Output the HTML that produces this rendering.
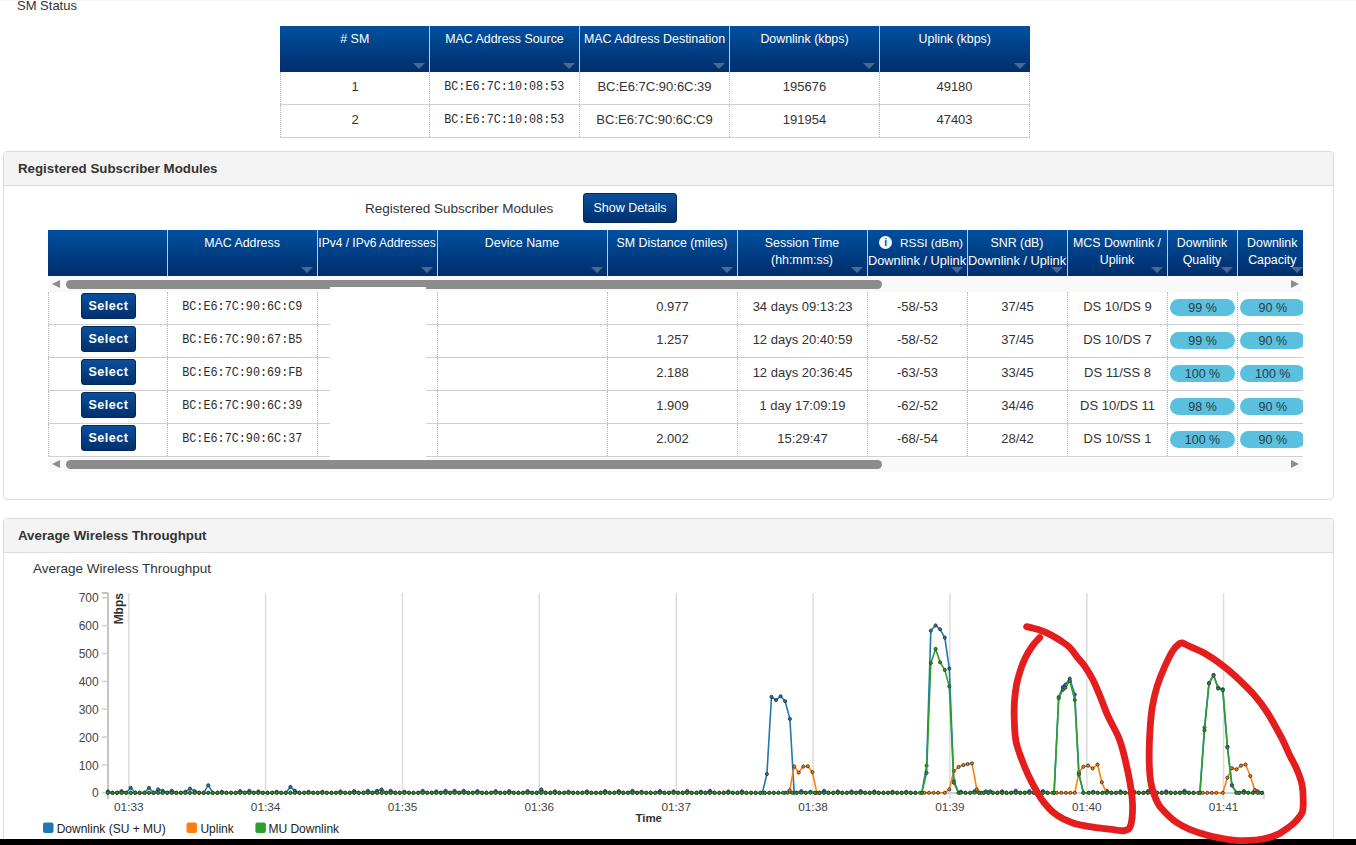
<!DOCTYPE html>
<html><head><meta charset="utf-8">
<style>
*{box-sizing:border-box;margin:0;padding:0}
html,body{width:1356px;height:845px;overflow:hidden;background:#fff}
body{position:relative;font-family:"Liberation Sans",sans-serif;color:#333;font-size:13px}
.abs{position:absolute}
.topline{left:0;top:0;width:1356px;height:1px;background:#f7f7f7}
.smtitle{left:17px;top:-2px;font-size:13px;color:#333;line-height:16px}
table{border-collapse:collapse;table-layout:fixed}
.hd th{background:linear-gradient(#00509f,#002e6b);color:#fff;font-weight:normal;vertical-align:top;text-align:center;position:relative;border-left:1px solid #c8c8c8;font-size:12.4px;line-height:17px}
.hd th:first-child{border-left:none}
.hd th:first-child::before{content:"";position:absolute;left:-1px;top:0;bottom:0;width:1px;background:linear-gradient(#00509f,#002e6b)}
.hd th .tri{position:absolute;right:4px;bottom:3px;width:0;height:0;border-left:6px solid transparent;border-right:6px solid transparent;border-top:6px solid rgba(160,170,190,.45)}
.bd td{text-align:center;padding-bottom:2px;border-left:1px dotted #b8b8b8;border-bottom:1px solid #cfcfcf;color:#333;font-size:13px}
.bd td.mono,.mono{font-family:"Liberation Mono",monospace;font-size:11.8px}
.panel{border:1px solid #ddd;border-radius:4px;background:#fff}
.phead{position:absolute;left:0;top:0;right:0;height:34px;background:#f4f4f4;border-bottom:1px solid #ddd;border-radius:4px 4px 0 0}
.ptitle{position:absolute;left:14px;top:9px;font-weight:bold;font-size:13.3px;color:#333}
.btn{background:linear-gradient(#0a4f9c,#00306c);color:#fff;border:1px solid #002a5c;border-radius:3px;text-align:center}
.badge{display:inline-block;position:relative;top:1px;background:#5bc0de;border-radius:9px;height:17px;line-height:19px;color:#2a3a44;font-size:12.5px}
.sb{background:#f9f9f9}
.thumb{position:absolute;background:#8c8c8c;border-radius:5px;height:9px}
.larr{position:absolute;width:0;height:0;border-top:4.5px solid transparent;border-bottom:4.5px solid transparent;border-right:8px solid #8c8c8c}
.rarr{position:absolute;width:0;height:0;border-top:4.5px solid transparent;border-bottom:4.5px solid transparent;border-left:8px solid #8c8c8c}
.sel{position:relative;top:-1px;width:55px;height:26px;line-height:24px;margin-left:32px;font-weight:bold;font-size:12.6px;letter-spacing:.5px}
.info{display:inline-block;width:13px;height:13px;border-radius:50%;background:#fff;color:#00479a;font-weight:bold;font-size:10px;line-height:13px;text-align:center;vertical-align:1px;margin-right:8px;margin-left:8px}
.m{display:inline-block;font-size:13.4px;transform:scaleX(.88);color:#2a2a2a}
</style></head><body>
<div class="abs topline"></div>
<div class="abs smtitle">SM Status</div>

<!-- SM status table -->
<table class="abs" style="left:280px;top:26px;width:749px">
<colgroup><col style="width:149px"><col style="width:150px"><col style="width:150px"><col style="width:150px"><col style="width:150px"></colgroup>
<tr class="hd" style="height:46px">
<th style="padding-top:5px"># SM<span class="tri"></span></th>
<th style="padding-top:5px">MAC Address Source<span class="tri"></span></th>
<th style="padding-top:5px">MAC Address Destination<span class="tri"></span></th>
<th style="padding-top:5px">Downlink (kbps)<span class="tri"></span></th>
<th style="padding-top:5px">Uplink (kbps)<span class="tri"></span></th>
</tr>
<tr class="bd" style="height:32px"><td>1</td><td class="mono"><span class="m">BC:E6:7C:10:08:53</span></td><td>BC:E6:7C:90:6C:39</td><td>195676</td><td style="border-right:1px dotted #b8b8b8">49180</td></tr>
<tr class="bd" style="height:33px"><td>2</td><td class="mono"><span class="m">BC:E6:7C:10:08:53</span></td><td>BC:E6:7C:90:6C:C9</td><td>191954</td><td style="border-right:1px dotted #b8b8b8">47403</td></tr>
</table>

<!-- Panel 1 -->
<div class="abs panel" style="left:3px;top:151px;width:1331px;height:349px">
  <div class="phead"><div class="ptitle">Registered Subscriber Modules</div></div>
</div>
<div class="abs" style="left:365px;top:201px;font-size:13.5px;color:#333">Registered Subscriber Modules</div>
<div class="abs btn" style="left:583px;top:193px;width:94px;height:30px;line-height:28px;font-size:12.5px">Show Details</div>


<!-- Registered table -->
<div class="abs" style="left:48px;top:230px;width:1255px;height:242px;overflow:hidden">
<table class="abs" style="left:0;top:0;width:1259px">
<colgroup><col style="width:119px"><col style="width:150px"><col style="width:120px"><col style="width:170px"><col style="width:130px"><col style="width:130px"><col style="width:100px"><col style="width:100px"><col style="width:100px"><col style="width:70px"><col style="width:70px"></colgroup>
<tr class="hd" style="height:46px">
<th></th>
<th style="padding-top:5px">MAC Address<span class="tri"></span></th>
<th style="padding-top:5px;white-space:nowrap;font-size:12px">IPv4 / IPv6 Addresses<span class="tri"></span></th>
<th style="padding-top:5px">Device Name<span class="tri"></span></th>
<th style="padding-top:5px">SM Distance (miles)<span class="tri"></span></th>
<th style="padding-top:5px">Session Time<br>(hh:mm:ss)<span class="tri"></span></th>
<th style="padding-top:5px;white-space:nowrap"><span class="info">i</span><span style="font-size:11.8px">RSSI (dBm)</span><br><span style="font-size:12.8px">Downlink / Uplink</span><span class="tri"></span></th>
<th style="padding-top:5px;white-space:nowrap">SNR (dB)<br><span style="font-size:12.8px">Downlink / Uplink</span><span class="tri"></span></th>
<th style="padding-top:5px">MCS Downlink /<br>Uplink<span class="tri"></span></th>
<th style="padding-top:5px">Downlink<br>Quality<span class="tri"></span></th>
<th style="padding-top:5px">Downlink<br>Capacity<span class="tri"></span></th>
</tr>
</table>
<div class="abs sb" style="left:0;top:46px;width:1255px;height:16px"><div class="larr" style="left:4px;top:4px"></div><div class="thumb" style="left:18px;top:4px;width:816px"></div><div class="rarr" style="left:1243px;top:4px"></div></div>
<table class="abs reg" style="left:0;top:62px;width:1259px">
<colgroup><col style="width:119px"><col style="width:150px"><col style="width:120px"><col style="width:170px"><col style="width:130px"><col style="width:130px"><col style="width:100px"><col style="width:100px"><col style="width:100px"><col style="width:70px"><col style="width:70px"></colgroup>
<tr class="bd" style="height:32px"><td><div class="btn sel">Select</div></td><td class="mono"><span class="m">BC:E6:7C:90:6C:C9</span></td><td></td><td></td><td>0.977</td><td>34 days 09:13:23</td><td>-58/-53</td><td>37/45</td><td>DS 10/DS 9</td><td><span class="badge" style="width:65px">99 %</span></td><td><span class="badge" style="width:65px">90 %</span></td></tr>
<tr class="bd" style="height:33px"><td><div class="btn sel">Select</div></td><td class="mono"><span class="m">BC:E6:7C:90:67:B5</span></td><td></td><td></td><td>1.257</td><td>12 days 20:40:59</td><td>-58/-52</td><td>37/45</td><td>DS 10/DS 7</td><td><span class="badge" style="width:65px">99 %</span></td><td><span class="badge" style="width:65px">90 %</span></td></tr>
<tr class="bd" style="height:33px"><td><div class="btn sel">Select</div></td><td class="mono"><span class="m">BC:E6:7C:90:69:FB</span></td><td></td><td></td><td>2.188</td><td>12 days 20:36:45</td><td>-63/-53</td><td>33/45</td><td>DS 11/SS 8</td><td><span class="badge" style="width:65px">100 %</span></td><td><span class="badge" style="width:65px">100 %</span></td></tr>
<tr class="bd" style="height:33px"><td><div class="btn sel">Select</div></td><td class="mono"><span class="m">BC:E6:7C:90:6C:39</span></td><td></td><td></td><td>1.909</td><td>1 day 17:09:19</td><td>-62/-52</td><td>34/46</td><td>DS 10/DS 11</td><td><span class="badge" style="width:65px">98 %</span></td><td><span class="badge" style="width:65px">90 %</span></td></tr>
<tr class="bd" style="height:33px"><td><div class="btn sel">Select</div></td><td class="mono"><span class="m">BC:E6:7C:90:6C:37</span></td><td></td><td></td><td>2.002</td><td>15:29:47</td><td>-68/-54</td><td>28/42</td><td>DS 10/SS 1</td><td><span class="badge" style="width:65px">100 %</span></td><td><span class="badge" style="width:65px">90 %</span></td></tr>

</table>
<div class="abs sb" style="left:0;top:228px;width:1255px;height:14px"><div class="larr" style="left:4px;top:2px"></div><div class="thumb" style="left:18px;top:2px;width:816px"></div><div class="rarr" style="left:1243px;top:2px"></div></div>
</div>
<div class="abs" style="left:330px;top:287px;width:96px;height:173px;background:#fff"></div>

<!-- Panel 2 -->
<div class="abs panel" style="left:3px;top:518px;width:1331px;height:340px">
  <div class="phead"><div class="ptitle">Average Wireless Throughput</div></div>
</div>
<div class="abs" style="left:33px;top:561px;font-size:13.5px;color:#333">Average Wireless Throughput</div>

<!--CHART-->
<svg class="abs" style="left:0;top:0" width="1356" height="845">
<line x1="128.8" y1="593" x2="128.8" y2="799" stroke="#dcdcdc" stroke-width="1.5"/>
<line x1="265.6" y1="593" x2="265.6" y2="799" stroke="#dcdcdc" stroke-width="1.5"/>
<line x1="402.5" y1="593" x2="402.5" y2="799" stroke="#dcdcdc" stroke-width="1.5"/>
<line x1="539.3" y1="593" x2="539.3" y2="799" stroke="#dcdcdc" stroke-width="1.5"/>
<line x1="676.2" y1="593" x2="676.2" y2="799" stroke="#dcdcdc" stroke-width="1.5"/>
<line x1="813.0" y1="593" x2="813.0" y2="799" stroke="#dcdcdc" stroke-width="1.5"/>
<line x1="949.9" y1="593" x2="949.9" y2="799" stroke="#dcdcdc" stroke-width="1.5"/>
<line x1="1086.8" y1="593" x2="1086.8" y2="799" stroke="#dcdcdc" stroke-width="1.5"/>
<line x1="1223.6" y1="593" x2="1223.6" y2="799" stroke="#dcdcdc" stroke-width="1.5"/>
<line x1="108" y1="592.5" x2="108" y2="799" stroke="#c4c4c4" stroke-width="2"/>
<line x1="102" y1="593" x2="108" y2="593" stroke="#c4c4c4" stroke-width="2"/>
<line x1="102" y1="792.8" x2="108" y2="792.8" stroke="#d0d0d0" stroke-width="1.5"/>
<text x="98.7" y="797.4" text-anchor="end" font-size="12" fill="#444">0</text>
<line x1="102" y1="764.9" x2="108" y2="764.9" stroke="#d0d0d0" stroke-width="1.5"/>
<text x="98.7" y="769.5" text-anchor="end" font-size="12" fill="#444">100</text>
<line x1="102" y1="737.1" x2="108" y2="737.1" stroke="#d0d0d0" stroke-width="1.5"/>
<text x="98.7" y="741.7" text-anchor="end" font-size="12" fill="#444">200</text>
<line x1="102" y1="709.2" x2="108" y2="709.2" stroke="#d0d0d0" stroke-width="1.5"/>
<text x="98.7" y="713.8" text-anchor="end" font-size="12" fill="#444">300</text>
<line x1="102" y1="681.4" x2="108" y2="681.4" stroke="#d0d0d0" stroke-width="1.5"/>
<text x="98.7" y="686.0" text-anchor="end" font-size="12" fill="#444">400</text>
<line x1="102" y1="653.5" x2="108" y2="653.5" stroke="#d0d0d0" stroke-width="1.5"/>
<text x="98.7" y="658.1" text-anchor="end" font-size="12" fill="#444">500</text>
<line x1="102" y1="625.6" x2="108" y2="625.6" stroke="#d0d0d0" stroke-width="1.5"/>
<text x="98.7" y="630.2" text-anchor="end" font-size="12" fill="#444">600</text>
<line x1="102" y1="597.8" x2="108" y2="597.8" stroke="#d0d0d0" stroke-width="1.5"/>
<text x="98.7" y="602.4" text-anchor="end" font-size="12" fill="#444">700</text>
<line x1="108" y1="793" x2="1264" y2="793" stroke="#cfcfcf" stroke-width="2"/>
<line x1="1264" y1="793" x2="1264" y2="799" stroke="#cfcfcf" stroke-width="1.5"/>
<text x="128.8" y="811.2" text-anchor="middle" font-size="11.8" fill="#444">01:33</text>
<text x="265.6" y="811.2" text-anchor="middle" font-size="11.8" fill="#444">01:34</text>
<text x="402.5" y="811.2" text-anchor="middle" font-size="11.8" fill="#444">01:35</text>
<text x="539.3" y="811.2" text-anchor="middle" font-size="11.8" fill="#444">01:36</text>
<text x="676.2" y="811.2" text-anchor="middle" font-size="11.8" fill="#444">01:37</text>
<text x="813.0" y="811.2" text-anchor="middle" font-size="11.8" fill="#444">01:38</text>
<text x="949.9" y="811.2" text-anchor="middle" font-size="11.8" fill="#444">01:39</text>
<text x="1086.8" y="811.2" text-anchor="middle" font-size="11.8" fill="#444">01:40</text>
<text x="1223.6" y="811.2" text-anchor="middle" font-size="11.8" fill="#444">01:41</text>
<text x="648.7" y="822" text-anchor="middle" font-size="11.5" font-weight="bold" fill="#333">Time</text>
<text transform="translate(122.8 608.7) rotate(-90)" text-anchor="middle" font-size="12" font-weight="bold" fill="#333">Mbps</text>
<path d="M107.9 791.4 L112.5 792.8 L117.0 792.8 L121.6 791.1 L126.1 792.8 L130.7 787.8 L135.3 792.8 L139.8 792.8 L144.4 792.8 L149.0 787.8 L153.5 792.8 L158.1 789.4 L162.6 790.8 L167.2 792.8 L171.8 790.8 L176.3 792.8 L180.9 792.8 L185.4 791.7 L190.0 788.6 L194.6 791.1 L199.1 792.8 L203.7 792.8 L208.3 785.2 L212.8 792.8 L217.4 792.8 L221.9 791.7 L226.5 792.8 L231.1 792.8 L235.6 792.8 L240.2 791.1 L244.8 792.8 L249.3 790.8 L253.9 792.8 L258.4 791.4 L263.0 792.8 L267.6 792.8 L272.1 792.8 L276.7 791.7 L281.2 792.8 L285.8 792.8 L290.4 786.9 L294.9 790.8 L299.5 792.8 L304.1 792.8 L308.6 791.7 L313.2 792.8 L317.7 792.8 L322.3 791.7 L326.9 792.8 L331.4 792.8 L336.0 792.8 L340.5 791.4 L345.1 792.8 L349.7 792.8 L354.2 791.1 L358.8 792.8 L363.4 792.8 L367.9 790.8 L372.5 792.8 L377.0 790.8 L381.6 789.4 L386.2 792.8 L390.7 790.8 L395.3 792.8 L399.8 792.8 L404.4 791.7 L409.0 792.8 L413.5 792.8 L418.1 792.8 L422.7 790.8 L427.2 792.8 L431.8 792.8 L436.3 791.4 L440.9 792.8 L445.5 790.8 L450.0 792.8 L454.6 790.8 L459.2 792.8 L463.7 790.8 L468.3 792.8 L472.8 792.8 L477.4 791.1 L482.0 792.8 L486.5 792.8 L491.1 792.8 L495.6 791.1 L500.2 792.8 L504.8 792.8 L509.3 791.1 L513.9 792.8 L518.5 792.8 L523.0 792.8 L527.6 791.1 L532.1 792.8 L536.7 792.8 L541.3 789.4 L545.8 792.8 L550.4 792.8 L554.9 791.4 L559.5 792.8 L564.1 792.8 L568.6 791.7 L573.2 792.8 L577.8 792.8 L582.3 792.8 L586.9 791.4 L591.4 792.8 L596.0 792.8 L600.6 792.8 L605.1 791.1 L609.7 792.8 L614.2 792.8 L618.8 791.1 L623.4 792.8 L627.9 792.8 L632.5 790.8 L637.1 792.8 L641.6 791.7 L646.2 792.8 L650.7 792.8 L655.3 792.8 L659.9 791.1 L664.4 792.8 L669.0 792.8 L673.6 791.4 L678.1 792.8 L682.7 792.8 L687.2 791.1 L691.8 792.8 L696.4 792.8 L700.9 791.7 L705.5 792.8 L710.0 790.8 L714.6 792.8 L719.2 792.8 L723.7 792.8 L728.3 791.4 L732.9 792.8 L737.4 792.8 L742.0 791.4 L746.5 792.8 L751.1 792.8 L755.7 792.8 L762.4 792.8 L766.9 774.0 L771.5 696.8 L776.0 700.1 L780.6 696.2 L785.1 701.2 L789.9 718.9 L794.2 792.8 L796.7 792.8 L801.3 791.1 L805.8 792.8 L810.4 791.7 L815.0 792.8 L819.5 792.8 L824.1 790.8 L828.6 792.8 L833.2 792.8 L837.8 791.4 L842.3 792.8 L846.9 792.8 L851.5 791.4 L856.0 792.8 L860.6 791.1 L865.1 792.8 L869.7 792.8 L874.3 791.4 L878.8 792.8 L883.4 792.8 L888.0 792.8 L892.5 791.7 L897.1 792.8 L901.6 792.8 L906.2 791.7 L910.8 792.8 L915.3 792.8 L921.8 792.8 L926.6 765.6 L930.8 630.7 L935.6 625.4 L940.1 629.3 L944.8 637.7 L949.3 668.5 L953.8 780.5 L958.6 792.8 L960.9 791.7 L965.5 792.8 L970.1 792.8 L974.6 791.1 L979.2 792.8 L985.8 791.4 L990.4 791.4 L992.9 792.8 L997.4 792.8 L1002.0 791.4 L1006.6 792.8 L1011.1 792.8 L1015.7 790.8 L1020.2 792.8 L1024.8 792.8 L1029.4 791.1 L1033.9 792.8 L1038.5 792.8 L1043.0 791.1 L1047.6 792.8 L1054.1 792.8 L1058.7 697.0 L1062.9 687.0 L1065.3 684.7 L1069.8 678.6 L1074.8 694.5 L1078.9 773.8 L1083.4 792.8 L1088.7 792.8 L1093.2 791.7 L1097.8 792.8 L1102.4 792.8 L1106.9 790.8 L1111.5 792.8 L1116.0 792.8 L1120.6 791.4 L1125.2 792.8 L1129.7 792.8 L1134.3 791.7 L1138.8 792.8 L1143.4 792.8 L1148.0 791.1 L1152.5 792.8 L1157.1 792.8 L1161.7 792.8 L1166.2 791.4 L1170.8 792.8 L1175.3 792.8 L1179.9 792.8 L1184.5 790.8 L1189.0 792.8 L1193.6 792.8 L1199.9 792.8 L1204.5 727.6 L1209.0 683.0 L1213.6 674.9 L1218.1 687.5 L1222.8 689.2 L1227.4 746.6 L1231.9 785.0 L1236.5 792.8 L1239.2 792.8 L1243.8 791.1 L1248.3 792.8 L1252.9 792.8 L1257.4 791.1 L1262.0 792.8" fill="none" stroke="#1f77b4" stroke-width="1.6" stroke-linejoin="round"/>
<g fill="#1f77b4" stroke="#333" stroke-width="0.9"><circle cx="107.9" cy="791.4" r="1.55"/><circle cx="112.5" cy="792.8" r="1.55"/><circle cx="117.0" cy="792.8" r="1.55"/><circle cx="121.6" cy="791.1" r="1.55"/><circle cx="126.1" cy="792.8" r="1.55"/><circle cx="130.7" cy="787.8" r="1.55"/><circle cx="135.3" cy="792.8" r="1.55"/><circle cx="139.8" cy="792.8" r="1.55"/><circle cx="144.4" cy="792.8" r="1.55"/><circle cx="149.0" cy="787.8" r="1.55"/><circle cx="153.5" cy="792.8" r="1.55"/><circle cx="158.1" cy="789.4" r="1.55"/><circle cx="162.6" cy="790.8" r="1.55"/><circle cx="167.2" cy="792.8" r="1.55"/><circle cx="171.8" cy="790.8" r="1.55"/><circle cx="176.3" cy="792.8" r="1.55"/><circle cx="180.9" cy="792.8" r="1.55"/><circle cx="185.4" cy="791.7" r="1.55"/><circle cx="190.0" cy="788.6" r="1.55"/><circle cx="194.6" cy="791.1" r="1.55"/><circle cx="199.1" cy="792.8" r="1.55"/><circle cx="203.7" cy="792.8" r="1.55"/><circle cx="208.3" cy="785.2" r="1.55"/><circle cx="212.8" cy="792.8" r="1.55"/><circle cx="217.4" cy="792.8" r="1.55"/><circle cx="221.9" cy="791.7" r="1.55"/><circle cx="226.5" cy="792.8" r="1.55"/><circle cx="231.1" cy="792.8" r="1.55"/><circle cx="235.6" cy="792.8" r="1.55"/><circle cx="240.2" cy="791.1" r="1.55"/><circle cx="244.8" cy="792.8" r="1.55"/><circle cx="249.3" cy="790.8" r="1.55"/><circle cx="253.9" cy="792.8" r="1.55"/><circle cx="258.4" cy="791.4" r="1.55"/><circle cx="263.0" cy="792.8" r="1.55"/><circle cx="267.6" cy="792.8" r="1.55"/><circle cx="272.1" cy="792.8" r="1.55"/><circle cx="276.7" cy="791.7" r="1.55"/><circle cx="281.2" cy="792.8" r="1.55"/><circle cx="285.8" cy="792.8" r="1.55"/><circle cx="290.4" cy="786.9" r="1.55"/><circle cx="294.9" cy="790.8" r="1.55"/><circle cx="299.5" cy="792.8" r="1.55"/><circle cx="304.1" cy="792.8" r="1.55"/><circle cx="308.6" cy="791.7" r="1.55"/><circle cx="313.2" cy="792.8" r="1.55"/><circle cx="317.7" cy="792.8" r="1.55"/><circle cx="322.3" cy="791.7" r="1.55"/><circle cx="326.9" cy="792.8" r="1.55"/><circle cx="331.4" cy="792.8" r="1.55"/><circle cx="336.0" cy="792.8" r="1.55"/><circle cx="340.5" cy="791.4" r="1.55"/><circle cx="345.1" cy="792.8" r="1.55"/><circle cx="349.7" cy="792.8" r="1.55"/><circle cx="354.2" cy="791.1" r="1.55"/><circle cx="358.8" cy="792.8" r="1.55"/><circle cx="363.4" cy="792.8" r="1.55"/><circle cx="367.9" cy="790.8" r="1.55"/><circle cx="372.5" cy="792.8" r="1.55"/><circle cx="377.0" cy="790.8" r="1.55"/><circle cx="381.6" cy="789.4" r="1.55"/><circle cx="386.2" cy="792.8" r="1.55"/><circle cx="390.7" cy="790.8" r="1.55"/><circle cx="395.3" cy="792.8" r="1.55"/><circle cx="399.8" cy="792.8" r="1.55"/><circle cx="404.4" cy="791.7" r="1.55"/><circle cx="409.0" cy="792.8" r="1.55"/><circle cx="413.5" cy="792.8" r="1.55"/><circle cx="418.1" cy="792.8" r="1.55"/><circle cx="422.7" cy="790.8" r="1.55"/><circle cx="427.2" cy="792.8" r="1.55"/><circle cx="431.8" cy="792.8" r="1.55"/><circle cx="436.3" cy="791.4" r="1.55"/><circle cx="440.9" cy="792.8" r="1.55"/><circle cx="445.5" cy="790.8" r="1.55"/><circle cx="450.0" cy="792.8" r="1.55"/><circle cx="454.6" cy="790.8" r="1.55"/><circle cx="459.2" cy="792.8" r="1.55"/><circle cx="463.7" cy="790.8" r="1.55"/><circle cx="468.3" cy="792.8" r="1.55"/><circle cx="472.8" cy="792.8" r="1.55"/><circle cx="477.4" cy="791.1" r="1.55"/><circle cx="482.0" cy="792.8" r="1.55"/><circle cx="486.5" cy="792.8" r="1.55"/><circle cx="491.1" cy="792.8" r="1.55"/><circle cx="495.6" cy="791.1" r="1.55"/><circle cx="500.2" cy="792.8" r="1.55"/><circle cx="504.8" cy="792.8" r="1.55"/><circle cx="509.3" cy="791.1" r="1.55"/><circle cx="513.9" cy="792.8" r="1.55"/><circle cx="518.5" cy="792.8" r="1.55"/><circle cx="523.0" cy="792.8" r="1.55"/><circle cx="527.6" cy="791.1" r="1.55"/><circle cx="532.1" cy="792.8" r="1.55"/><circle cx="536.7" cy="792.8" r="1.55"/><circle cx="541.3" cy="789.4" r="1.55"/><circle cx="545.8" cy="792.8" r="1.55"/><circle cx="550.4" cy="792.8" r="1.55"/><circle cx="554.9" cy="791.4" r="1.55"/><circle cx="559.5" cy="792.8" r="1.55"/><circle cx="564.1" cy="792.8" r="1.55"/><circle cx="568.6" cy="791.7" r="1.55"/><circle cx="573.2" cy="792.8" r="1.55"/><circle cx="577.8" cy="792.8" r="1.55"/><circle cx="582.3" cy="792.8" r="1.55"/><circle cx="586.9" cy="791.4" r="1.55"/><circle cx="591.4" cy="792.8" r="1.55"/><circle cx="596.0" cy="792.8" r="1.55"/><circle cx="600.6" cy="792.8" r="1.55"/><circle cx="605.1" cy="791.1" r="1.55"/><circle cx="609.7" cy="792.8" r="1.55"/><circle cx="614.2" cy="792.8" r="1.55"/><circle cx="618.8" cy="791.1" r="1.55"/><circle cx="623.4" cy="792.8" r="1.55"/><circle cx="627.9" cy="792.8" r="1.55"/><circle cx="632.5" cy="790.8" r="1.55"/><circle cx="637.1" cy="792.8" r="1.55"/><circle cx="641.6" cy="791.7" r="1.55"/><circle cx="646.2" cy="792.8" r="1.55"/><circle cx="650.7" cy="792.8" r="1.55"/><circle cx="655.3" cy="792.8" r="1.55"/><circle cx="659.9" cy="791.1" r="1.55"/><circle cx="664.4" cy="792.8" r="1.55"/><circle cx="669.0" cy="792.8" r="1.55"/><circle cx="673.6" cy="791.4" r="1.55"/><circle cx="678.1" cy="792.8" r="1.55"/><circle cx="682.7" cy="792.8" r="1.55"/><circle cx="687.2" cy="791.1" r="1.55"/><circle cx="691.8" cy="792.8" r="1.55"/><circle cx="696.4" cy="792.8" r="1.55"/><circle cx="700.9" cy="791.7" r="1.55"/><circle cx="705.5" cy="792.8" r="1.55"/><circle cx="710.0" cy="790.8" r="1.55"/><circle cx="714.6" cy="792.8" r="1.55"/><circle cx="719.2" cy="792.8" r="1.55"/><circle cx="723.7" cy="792.8" r="1.55"/><circle cx="728.3" cy="791.4" r="1.55"/><circle cx="732.9" cy="792.8" r="1.55"/><circle cx="737.4" cy="792.8" r="1.55"/><circle cx="742.0" cy="791.4" r="1.55"/><circle cx="746.5" cy="792.8" r="1.55"/><circle cx="751.1" cy="792.8" r="1.55"/><circle cx="755.7" cy="792.8" r="1.55"/><circle cx="762.4" cy="792.8" r="1.55"/><circle cx="766.9" cy="774.0" r="1.55"/><circle cx="771.5" cy="696.8" r="1.55"/><circle cx="776.0" cy="700.1" r="1.55"/><circle cx="780.6" cy="696.2" r="1.55"/><circle cx="785.1" cy="701.2" r="1.55"/><circle cx="789.9" cy="718.9" r="1.55"/><circle cx="794.2" cy="792.8" r="1.55"/><circle cx="796.7" cy="792.8" r="1.55"/><circle cx="801.3" cy="791.1" r="1.55"/><circle cx="805.8" cy="792.8" r="1.55"/><circle cx="810.4" cy="791.7" r="1.55"/><circle cx="815.0" cy="792.8" r="1.55"/><circle cx="819.5" cy="792.8" r="1.55"/><circle cx="824.1" cy="790.8" r="1.55"/><circle cx="828.6" cy="792.8" r="1.55"/><circle cx="833.2" cy="792.8" r="1.55"/><circle cx="837.8" cy="791.4" r="1.55"/><circle cx="842.3" cy="792.8" r="1.55"/><circle cx="846.9" cy="792.8" r="1.55"/><circle cx="851.5" cy="791.4" r="1.55"/><circle cx="856.0" cy="792.8" r="1.55"/><circle cx="860.6" cy="791.1" r="1.55"/><circle cx="865.1" cy="792.8" r="1.55"/><circle cx="869.7" cy="792.8" r="1.55"/><circle cx="874.3" cy="791.4" r="1.55"/><circle cx="878.8" cy="792.8" r="1.55"/><circle cx="883.4" cy="792.8" r="1.55"/><circle cx="888.0" cy="792.8" r="1.55"/><circle cx="892.5" cy="791.7" r="1.55"/><circle cx="897.1" cy="792.8" r="1.55"/><circle cx="901.6" cy="792.8" r="1.55"/><circle cx="906.2" cy="791.7" r="1.55"/><circle cx="910.8" cy="792.8" r="1.55"/><circle cx="915.3" cy="792.8" r="1.55"/><circle cx="921.8" cy="792.8" r="1.55"/><circle cx="926.6" cy="765.6" r="1.55"/><circle cx="930.8" cy="630.7" r="1.55"/><circle cx="935.6" cy="625.4" r="1.55"/><circle cx="940.1" cy="629.3" r="1.55"/><circle cx="944.8" cy="637.7" r="1.55"/><circle cx="949.3" cy="668.5" r="1.55"/><circle cx="953.8" cy="780.5" r="1.55"/><circle cx="958.6" cy="792.8" r="1.55"/><circle cx="960.9" cy="791.7" r="1.55"/><circle cx="965.5" cy="792.8" r="1.55"/><circle cx="970.1" cy="792.8" r="1.55"/><circle cx="974.6" cy="791.1" r="1.55"/><circle cx="979.2" cy="792.8" r="1.55"/><circle cx="985.8" cy="791.4" r="1.55"/><circle cx="990.4" cy="791.4" r="1.55"/><circle cx="992.9" cy="792.8" r="1.55"/><circle cx="997.4" cy="792.8" r="1.55"/><circle cx="1002.0" cy="791.4" r="1.55"/><circle cx="1006.6" cy="792.8" r="1.55"/><circle cx="1011.1" cy="792.8" r="1.55"/><circle cx="1015.7" cy="790.8" r="1.55"/><circle cx="1020.2" cy="792.8" r="1.55"/><circle cx="1024.8" cy="792.8" r="1.55"/><circle cx="1029.4" cy="791.1" r="1.55"/><circle cx="1033.9" cy="792.8" r="1.55"/><circle cx="1038.5" cy="792.8" r="1.55"/><circle cx="1043.0" cy="791.1" r="1.55"/><circle cx="1047.6" cy="792.8" r="1.55"/><circle cx="1054.1" cy="792.8" r="1.55"/><circle cx="1058.7" cy="697.0" r="1.55"/><circle cx="1062.9" cy="687.0" r="1.55"/><circle cx="1065.3" cy="684.7" r="1.55"/><circle cx="1069.8" cy="678.6" r="1.55"/><circle cx="1074.8" cy="694.5" r="1.55"/><circle cx="1078.9" cy="773.8" r="1.55"/><circle cx="1083.4" cy="792.8" r="1.55"/><circle cx="1088.7" cy="792.8" r="1.55"/><circle cx="1093.2" cy="791.7" r="1.55"/><circle cx="1097.8" cy="792.8" r="1.55"/><circle cx="1102.4" cy="792.8" r="1.55"/><circle cx="1106.9" cy="790.8" r="1.55"/><circle cx="1111.5" cy="792.8" r="1.55"/><circle cx="1116.0" cy="792.8" r="1.55"/><circle cx="1120.6" cy="791.4" r="1.55"/><circle cx="1125.2" cy="792.8" r="1.55"/><circle cx="1129.7" cy="792.8" r="1.55"/><circle cx="1134.3" cy="791.7" r="1.55"/><circle cx="1138.8" cy="792.8" r="1.55"/><circle cx="1143.4" cy="792.8" r="1.55"/><circle cx="1148.0" cy="791.1" r="1.55"/><circle cx="1152.5" cy="792.8" r="1.55"/><circle cx="1157.1" cy="792.8" r="1.55"/><circle cx="1161.7" cy="792.8" r="1.55"/><circle cx="1166.2" cy="791.4" r="1.55"/><circle cx="1170.8" cy="792.8" r="1.55"/><circle cx="1175.3" cy="792.8" r="1.55"/><circle cx="1179.9" cy="792.8" r="1.55"/><circle cx="1184.5" cy="790.8" r="1.55"/><circle cx="1189.0" cy="792.8" r="1.55"/><circle cx="1193.6" cy="792.8" r="1.55"/><circle cx="1199.9" cy="792.8" r="1.55"/><circle cx="1204.5" cy="727.6" r="1.55"/><circle cx="1209.0" cy="683.0" r="1.55"/><circle cx="1213.6" cy="674.9" r="1.55"/><circle cx="1218.1" cy="687.5" r="1.55"/><circle cx="1222.8" cy="689.2" r="1.55"/><circle cx="1227.4" cy="746.6" r="1.55"/><circle cx="1231.9" cy="785.0" r="1.55"/><circle cx="1236.5" cy="792.8" r="1.55"/><circle cx="1239.2" cy="792.8" r="1.55"/><circle cx="1243.8" cy="791.1" r="1.55"/><circle cx="1248.3" cy="792.8" r="1.55"/><circle cx="1252.9" cy="792.8" r="1.55"/><circle cx="1257.4" cy="791.1" r="1.55"/><circle cx="1262.0" cy="792.8" r="1.55"/></g>
<path d="M107.9 792.8 L112.5 792.8 L117.0 792.8 L121.6 792.8 L126.1 792.8 L130.7 792.8 L135.3 792.8 L139.8 792.8 L144.4 792.8 L149.0 792.8 L153.5 792.8 L158.1 792.8 L162.6 792.8 L167.2 792.8 L171.8 792.8 L176.3 792.8 L180.9 792.8 L185.4 792.8 L190.0 792.8 L194.6 792.8 L199.1 792.8 L203.7 792.8 L208.3 792.8 L212.8 792.8 L217.4 792.8 L221.9 792.8 L226.5 792.8 L231.1 792.8 L235.6 792.8 L240.2 792.8 L244.8 792.8 L249.3 792.8 L253.9 792.8 L258.4 792.8 L263.0 792.8 L267.6 792.8 L272.1 792.8 L276.7 792.8 L281.2 792.8 L285.8 792.8 L290.4 792.8 L294.9 792.8 L299.5 792.8 L304.1 792.8 L308.6 792.8 L313.2 792.8 L317.7 792.8 L322.3 792.8 L326.9 792.8 L331.4 792.8 L336.0 792.8 L340.5 792.8 L345.1 792.8 L349.7 792.8 L354.2 792.8 L358.8 792.8 L363.4 792.8 L367.9 792.8 L372.5 792.8 L377.0 792.8 L381.6 792.8 L386.2 792.8 L390.7 792.8 L395.3 792.8 L399.8 792.8 L404.4 792.8 L409.0 792.8 L413.5 792.8 L418.1 792.8 L422.7 792.8 L427.2 792.8 L431.8 792.8 L436.3 792.8 L440.9 792.8 L445.5 792.8 L450.0 792.8 L454.6 792.8 L459.2 792.8 L463.7 792.8 L468.3 792.8 L472.8 792.8 L477.4 792.8 L482.0 792.8 L486.5 792.8 L491.1 792.8 L495.6 792.8 L500.2 792.8 L504.8 792.8 L509.3 792.8 L513.9 792.8 L518.5 792.8 L523.0 792.8 L527.6 792.8 L532.1 792.8 L536.7 792.8 L541.3 792.8 L545.8 792.8 L550.4 792.8 L554.9 792.8 L559.5 792.8 L564.1 792.8 L568.6 792.8 L573.2 792.8 L577.8 792.8 L582.3 792.8 L586.9 792.8 L591.4 792.8 L596.0 792.8 L600.6 792.8 L605.1 792.8 L609.7 792.8 L614.2 792.8 L618.8 792.8 L623.4 792.8 L627.9 792.8 L632.5 792.8 L637.1 792.8 L641.6 792.8 L646.2 792.8 L650.7 792.8 L655.3 792.8 L659.9 792.8 L664.4 792.8 L669.0 792.8 L673.6 792.8 L678.1 792.8 L682.7 792.8 L687.2 792.8 L691.8 792.8 L696.4 792.8 L700.9 792.8 L705.5 792.8 L710.0 792.8 L714.6 792.8 L719.2 792.8 L723.7 792.8 L728.3 792.8 L732.9 792.8 L737.4 792.8 L742.0 792.8 L746.5 792.8 L751.1 792.8 L755.7 792.8 L760.2 792.8 L764.8 792.8 L769.3 792.8 L773.9 792.8 L778.5 792.8 L785.1 792.8 L789.6 790.3 L794.2 766.5 L798.7 772.6 L803.3 766.5 L807.8 766.2 L812.4 772.1 L816.9 792.8 L819.5 792.8 L824.1 792.8 L828.6 792.8 L833.2 792.8 L837.8 792.8 L842.3 792.8 L846.9 792.8 L851.5 792.8 L856.0 792.8 L860.6 792.8 L865.1 792.8 L869.7 792.8 L874.3 792.8 L878.8 792.8 L883.4 792.8 L888.0 792.8 L892.5 792.8 L897.1 792.8 L901.6 792.8 L906.2 792.8 L910.8 792.8 L915.3 792.8 L919.9 792.8 L924.4 792.8 L929.0 792.8 L933.6 792.8 L938.1 792.8 L944.8 792.8 L949.3 789.4 L953.8 771.0 L958.6 767.0 L963.3 765.1 L967.6 764.0 L972.0 763.4 L976.8 789.4 L981.3 792.8 L983.7 792.8 L988.3 792.8 L992.9 792.8 L997.4 792.8 L1002.0 792.8 L1006.6 792.8 L1011.1 792.8 L1015.7 792.8 L1020.2 792.8 L1024.8 792.8 L1029.4 792.8 L1033.9 792.8 L1038.5 792.8 L1043.0 792.8 L1047.6 792.8 L1052.2 792.8 L1056.7 792.8 L1061.3 792.8 L1065.9 792.8 L1070.4 792.8 L1074.8 792.8 L1078.9 772.4 L1083.4 766.8 L1088.0 765.6 L1092.7 768.4 L1097.5 764.5 L1101.8 782.2 L1106.3 792.8 L1111.5 792.8 L1116.0 792.8 L1120.6 792.8 L1125.2 792.8 L1129.7 792.8 L1134.3 792.8 L1138.8 792.8 L1143.4 792.8 L1148.0 792.8 L1152.5 792.8 L1157.1 792.8 L1161.7 792.8 L1166.2 792.8 L1170.8 792.8 L1175.3 792.8 L1179.9 792.8 L1184.5 792.8 L1189.0 792.8 L1193.6 792.8 L1198.1 792.8 L1202.7 792.8 L1207.3 792.8 L1211.8 792.8 L1216.4 792.8 L1222.8 792.8 L1227.4 777.7 L1231.9 768.2 L1236.5 769.3 L1241.0 765.6 L1245.6 764.5 L1250.3 776.0 L1254.8 790.0 L1259.4 792.8 L1262.0 792.8" fill="none" stroke="#ff7f0e" stroke-width="1.6" stroke-linejoin="round"/>
<g fill="#ff7f0e" stroke="#333" stroke-width="0.9"><circle cx="107.9" cy="792.8" r="1.55"/><circle cx="112.5" cy="792.8" r="1.55"/><circle cx="117.0" cy="792.8" r="1.55"/><circle cx="121.6" cy="792.8" r="1.55"/><circle cx="126.1" cy="792.8" r="1.55"/><circle cx="130.7" cy="792.8" r="1.55"/><circle cx="135.3" cy="792.8" r="1.55"/><circle cx="139.8" cy="792.8" r="1.55"/><circle cx="144.4" cy="792.8" r="1.55"/><circle cx="149.0" cy="792.8" r="1.55"/><circle cx="153.5" cy="792.8" r="1.55"/><circle cx="158.1" cy="792.8" r="1.55"/><circle cx="162.6" cy="792.8" r="1.55"/><circle cx="167.2" cy="792.8" r="1.55"/><circle cx="171.8" cy="792.8" r="1.55"/><circle cx="176.3" cy="792.8" r="1.55"/><circle cx="180.9" cy="792.8" r="1.55"/><circle cx="185.4" cy="792.8" r="1.55"/><circle cx="190.0" cy="792.8" r="1.55"/><circle cx="194.6" cy="792.8" r="1.55"/><circle cx="199.1" cy="792.8" r="1.55"/><circle cx="203.7" cy="792.8" r="1.55"/><circle cx="208.3" cy="792.8" r="1.55"/><circle cx="212.8" cy="792.8" r="1.55"/><circle cx="217.4" cy="792.8" r="1.55"/><circle cx="221.9" cy="792.8" r="1.55"/><circle cx="226.5" cy="792.8" r="1.55"/><circle cx="231.1" cy="792.8" r="1.55"/><circle cx="235.6" cy="792.8" r="1.55"/><circle cx="240.2" cy="792.8" r="1.55"/><circle cx="244.8" cy="792.8" r="1.55"/><circle cx="249.3" cy="792.8" r="1.55"/><circle cx="253.9" cy="792.8" r="1.55"/><circle cx="258.4" cy="792.8" r="1.55"/><circle cx="263.0" cy="792.8" r="1.55"/><circle cx="267.6" cy="792.8" r="1.55"/><circle cx="272.1" cy="792.8" r="1.55"/><circle cx="276.7" cy="792.8" r="1.55"/><circle cx="281.2" cy="792.8" r="1.55"/><circle cx="285.8" cy="792.8" r="1.55"/><circle cx="290.4" cy="792.8" r="1.55"/><circle cx="294.9" cy="792.8" r="1.55"/><circle cx="299.5" cy="792.8" r="1.55"/><circle cx="304.1" cy="792.8" r="1.55"/><circle cx="308.6" cy="792.8" r="1.55"/><circle cx="313.2" cy="792.8" r="1.55"/><circle cx="317.7" cy="792.8" r="1.55"/><circle cx="322.3" cy="792.8" r="1.55"/><circle cx="326.9" cy="792.8" r="1.55"/><circle cx="331.4" cy="792.8" r="1.55"/><circle cx="336.0" cy="792.8" r="1.55"/><circle cx="340.5" cy="792.8" r="1.55"/><circle cx="345.1" cy="792.8" r="1.55"/><circle cx="349.7" cy="792.8" r="1.55"/><circle cx="354.2" cy="792.8" r="1.55"/><circle cx="358.8" cy="792.8" r="1.55"/><circle cx="363.4" cy="792.8" r="1.55"/><circle cx="367.9" cy="792.8" r="1.55"/><circle cx="372.5" cy="792.8" r="1.55"/><circle cx="377.0" cy="792.8" r="1.55"/><circle cx="381.6" cy="792.8" r="1.55"/><circle cx="386.2" cy="792.8" r="1.55"/><circle cx="390.7" cy="792.8" r="1.55"/><circle cx="395.3" cy="792.8" r="1.55"/><circle cx="399.8" cy="792.8" r="1.55"/><circle cx="404.4" cy="792.8" r="1.55"/><circle cx="409.0" cy="792.8" r="1.55"/><circle cx="413.5" cy="792.8" r="1.55"/><circle cx="418.1" cy="792.8" r="1.55"/><circle cx="422.7" cy="792.8" r="1.55"/><circle cx="427.2" cy="792.8" r="1.55"/><circle cx="431.8" cy="792.8" r="1.55"/><circle cx="436.3" cy="792.8" r="1.55"/><circle cx="440.9" cy="792.8" r="1.55"/><circle cx="445.5" cy="792.8" r="1.55"/><circle cx="450.0" cy="792.8" r="1.55"/><circle cx="454.6" cy="792.8" r="1.55"/><circle cx="459.2" cy="792.8" r="1.55"/><circle cx="463.7" cy="792.8" r="1.55"/><circle cx="468.3" cy="792.8" r="1.55"/><circle cx="472.8" cy="792.8" r="1.55"/><circle cx="477.4" cy="792.8" r="1.55"/><circle cx="482.0" cy="792.8" r="1.55"/><circle cx="486.5" cy="792.8" r="1.55"/><circle cx="491.1" cy="792.8" r="1.55"/><circle cx="495.6" cy="792.8" r="1.55"/><circle cx="500.2" cy="792.8" r="1.55"/><circle cx="504.8" cy="792.8" r="1.55"/><circle cx="509.3" cy="792.8" r="1.55"/><circle cx="513.9" cy="792.8" r="1.55"/><circle cx="518.5" cy="792.8" r="1.55"/><circle cx="523.0" cy="792.8" r="1.55"/><circle cx="527.6" cy="792.8" r="1.55"/><circle cx="532.1" cy="792.8" r="1.55"/><circle cx="536.7" cy="792.8" r="1.55"/><circle cx="541.3" cy="792.8" r="1.55"/><circle cx="545.8" cy="792.8" r="1.55"/><circle cx="550.4" cy="792.8" r="1.55"/><circle cx="554.9" cy="792.8" r="1.55"/><circle cx="559.5" cy="792.8" r="1.55"/><circle cx="564.1" cy="792.8" r="1.55"/><circle cx="568.6" cy="792.8" r="1.55"/><circle cx="573.2" cy="792.8" r="1.55"/><circle cx="577.8" cy="792.8" r="1.55"/><circle cx="582.3" cy="792.8" r="1.55"/><circle cx="586.9" cy="792.8" r="1.55"/><circle cx="591.4" cy="792.8" r="1.55"/><circle cx="596.0" cy="792.8" r="1.55"/><circle cx="600.6" cy="792.8" r="1.55"/><circle cx="605.1" cy="792.8" r="1.55"/><circle cx="609.7" cy="792.8" r="1.55"/><circle cx="614.2" cy="792.8" r="1.55"/><circle cx="618.8" cy="792.8" r="1.55"/><circle cx="623.4" cy="792.8" r="1.55"/><circle cx="627.9" cy="792.8" r="1.55"/><circle cx="632.5" cy="792.8" r="1.55"/><circle cx="637.1" cy="792.8" r="1.55"/><circle cx="641.6" cy="792.8" r="1.55"/><circle cx="646.2" cy="792.8" r="1.55"/><circle cx="650.7" cy="792.8" r="1.55"/><circle cx="655.3" cy="792.8" r="1.55"/><circle cx="659.9" cy="792.8" r="1.55"/><circle cx="664.4" cy="792.8" r="1.55"/><circle cx="669.0" cy="792.8" r="1.55"/><circle cx="673.6" cy="792.8" r="1.55"/><circle cx="678.1" cy="792.8" r="1.55"/><circle cx="682.7" cy="792.8" r="1.55"/><circle cx="687.2" cy="792.8" r="1.55"/><circle cx="691.8" cy="792.8" r="1.55"/><circle cx="696.4" cy="792.8" r="1.55"/><circle cx="700.9" cy="792.8" r="1.55"/><circle cx="705.5" cy="792.8" r="1.55"/><circle cx="710.0" cy="792.8" r="1.55"/><circle cx="714.6" cy="792.8" r="1.55"/><circle cx="719.2" cy="792.8" r="1.55"/><circle cx="723.7" cy="792.8" r="1.55"/><circle cx="728.3" cy="792.8" r="1.55"/><circle cx="732.9" cy="792.8" r="1.55"/><circle cx="737.4" cy="792.8" r="1.55"/><circle cx="742.0" cy="792.8" r="1.55"/><circle cx="746.5" cy="792.8" r="1.55"/><circle cx="751.1" cy="792.8" r="1.55"/><circle cx="755.7" cy="792.8" r="1.55"/><circle cx="760.2" cy="792.8" r="1.55"/><circle cx="764.8" cy="792.8" r="1.55"/><circle cx="769.3" cy="792.8" r="1.55"/><circle cx="773.9" cy="792.8" r="1.55"/><circle cx="778.5" cy="792.8" r="1.55"/><circle cx="785.1" cy="792.8" r="1.55"/><circle cx="789.6" cy="790.3" r="1.55"/><circle cx="794.2" cy="766.5" r="1.55"/><circle cx="798.7" cy="772.6" r="1.55"/><circle cx="803.3" cy="766.5" r="1.55"/><circle cx="807.8" cy="766.2" r="1.55"/><circle cx="812.4" cy="772.1" r="1.55"/><circle cx="816.9" cy="792.8" r="1.55"/><circle cx="819.5" cy="792.8" r="1.55"/><circle cx="824.1" cy="792.8" r="1.55"/><circle cx="828.6" cy="792.8" r="1.55"/><circle cx="833.2" cy="792.8" r="1.55"/><circle cx="837.8" cy="792.8" r="1.55"/><circle cx="842.3" cy="792.8" r="1.55"/><circle cx="846.9" cy="792.8" r="1.55"/><circle cx="851.5" cy="792.8" r="1.55"/><circle cx="856.0" cy="792.8" r="1.55"/><circle cx="860.6" cy="792.8" r="1.55"/><circle cx="865.1" cy="792.8" r="1.55"/><circle cx="869.7" cy="792.8" r="1.55"/><circle cx="874.3" cy="792.8" r="1.55"/><circle cx="878.8" cy="792.8" r="1.55"/><circle cx="883.4" cy="792.8" r="1.55"/><circle cx="888.0" cy="792.8" r="1.55"/><circle cx="892.5" cy="792.8" r="1.55"/><circle cx="897.1" cy="792.8" r="1.55"/><circle cx="901.6" cy="792.8" r="1.55"/><circle cx="906.2" cy="792.8" r="1.55"/><circle cx="910.8" cy="792.8" r="1.55"/><circle cx="915.3" cy="792.8" r="1.55"/><circle cx="919.9" cy="792.8" r="1.55"/><circle cx="924.4" cy="792.8" r="1.55"/><circle cx="929.0" cy="792.8" r="1.55"/><circle cx="933.6" cy="792.8" r="1.55"/><circle cx="938.1" cy="792.8" r="1.55"/><circle cx="944.8" cy="792.8" r="1.55"/><circle cx="949.3" cy="789.4" r="1.55"/><circle cx="953.8" cy="771.0" r="1.55"/><circle cx="958.6" cy="767.0" r="1.55"/><circle cx="963.3" cy="765.1" r="1.55"/><circle cx="967.6" cy="764.0" r="1.55"/><circle cx="972.0" cy="763.4" r="1.55"/><circle cx="976.8" cy="789.4" r="1.55"/><circle cx="981.3" cy="792.8" r="1.55"/><circle cx="983.7" cy="792.8" r="1.55"/><circle cx="988.3" cy="792.8" r="1.55"/><circle cx="992.9" cy="792.8" r="1.55"/><circle cx="997.4" cy="792.8" r="1.55"/><circle cx="1002.0" cy="792.8" r="1.55"/><circle cx="1006.6" cy="792.8" r="1.55"/><circle cx="1011.1" cy="792.8" r="1.55"/><circle cx="1015.7" cy="792.8" r="1.55"/><circle cx="1020.2" cy="792.8" r="1.55"/><circle cx="1024.8" cy="792.8" r="1.55"/><circle cx="1029.4" cy="792.8" r="1.55"/><circle cx="1033.9" cy="792.8" r="1.55"/><circle cx="1038.5" cy="792.8" r="1.55"/><circle cx="1043.0" cy="792.8" r="1.55"/><circle cx="1047.6" cy="792.8" r="1.55"/><circle cx="1052.2" cy="792.8" r="1.55"/><circle cx="1056.7" cy="792.8" r="1.55"/><circle cx="1061.3" cy="792.8" r="1.55"/><circle cx="1065.9" cy="792.8" r="1.55"/><circle cx="1070.4" cy="792.8" r="1.55"/><circle cx="1074.8" cy="792.8" r="1.55"/><circle cx="1078.9" cy="772.4" r="1.55"/><circle cx="1083.4" cy="766.8" r="1.55"/><circle cx="1088.0" cy="765.6" r="1.55"/><circle cx="1092.7" cy="768.4" r="1.55"/><circle cx="1097.5" cy="764.5" r="1.55"/><circle cx="1101.8" cy="782.2" r="1.55"/><circle cx="1106.3" cy="792.8" r="1.55"/><circle cx="1111.5" cy="792.8" r="1.55"/><circle cx="1116.0" cy="792.8" r="1.55"/><circle cx="1120.6" cy="792.8" r="1.55"/><circle cx="1125.2" cy="792.8" r="1.55"/><circle cx="1129.7" cy="792.8" r="1.55"/><circle cx="1134.3" cy="792.8" r="1.55"/><circle cx="1138.8" cy="792.8" r="1.55"/><circle cx="1143.4" cy="792.8" r="1.55"/><circle cx="1148.0" cy="792.8" r="1.55"/><circle cx="1152.5" cy="792.8" r="1.55"/><circle cx="1157.1" cy="792.8" r="1.55"/><circle cx="1161.7" cy="792.8" r="1.55"/><circle cx="1166.2" cy="792.8" r="1.55"/><circle cx="1170.8" cy="792.8" r="1.55"/><circle cx="1175.3" cy="792.8" r="1.55"/><circle cx="1179.9" cy="792.8" r="1.55"/><circle cx="1184.5" cy="792.8" r="1.55"/><circle cx="1189.0" cy="792.8" r="1.55"/><circle cx="1193.6" cy="792.8" r="1.55"/><circle cx="1198.1" cy="792.8" r="1.55"/><circle cx="1202.7" cy="792.8" r="1.55"/><circle cx="1207.3" cy="792.8" r="1.55"/><circle cx="1211.8" cy="792.8" r="1.55"/><circle cx="1216.4" cy="792.8" r="1.55"/><circle cx="1222.8" cy="792.8" r="1.55"/><circle cx="1227.4" cy="777.7" r="1.55"/><circle cx="1231.9" cy="768.2" r="1.55"/><circle cx="1236.5" cy="769.3" r="1.55"/><circle cx="1241.0" cy="765.6" r="1.55"/><circle cx="1245.6" cy="764.5" r="1.55"/><circle cx="1250.3" cy="776.0" r="1.55"/><circle cx="1254.8" cy="790.0" r="1.55"/><circle cx="1259.4" cy="792.8" r="1.55"/><circle cx="1262.0" cy="792.8" r="1.55"/></g>
<path d="M107.9 792.8 L112.5 792.8 L117.0 792.8 L121.6 792.8 L126.1 792.8 L130.7 792.8 L135.3 792.8 L139.8 792.8 L144.4 792.8 L149.0 792.8 L153.5 792.8 L158.1 792.8 L162.6 792.8 L167.2 792.8 L171.8 792.8 L176.3 792.8 L180.9 792.8 L185.4 792.8 L190.0 792.8 L194.6 792.8 L199.1 792.8 L203.7 792.8 L208.3 792.8 L212.8 792.8 L217.4 792.8 L221.9 792.8 L226.5 792.8 L231.1 792.8 L235.6 792.8 L240.2 792.8 L244.8 792.8 L249.3 792.8 L253.9 792.8 L258.4 792.8 L263.0 792.8 L267.6 792.8 L272.1 792.8 L276.7 792.8 L281.2 792.8 L285.8 792.8 L290.4 792.8 L294.9 792.8 L299.5 792.8 L304.1 792.8 L308.6 792.8 L313.2 792.8 L317.7 792.8 L322.3 792.8 L326.9 792.8 L331.4 792.8 L336.0 792.8 L340.5 792.8 L345.1 792.8 L349.7 792.8 L354.2 792.8 L358.8 792.8 L363.4 792.8 L367.9 792.8 L372.5 792.8 L377.0 792.8 L381.6 792.8 L386.2 792.8 L390.7 792.8 L395.3 792.8 L399.8 792.8 L404.4 792.8 L409.0 792.8 L413.5 792.8 L418.1 792.8 L422.7 792.8 L427.2 792.8 L431.8 792.8 L436.3 792.8 L440.9 792.8 L445.5 792.8 L450.0 792.8 L454.6 792.8 L459.2 792.8 L463.7 792.8 L468.3 792.8 L472.8 792.8 L477.4 792.8 L482.0 792.8 L486.5 792.8 L491.1 792.8 L495.6 792.8 L500.2 792.8 L504.8 792.8 L509.3 792.8 L513.9 792.8 L518.5 792.8 L523.0 792.8 L527.6 792.8 L532.1 792.8 L536.7 792.8 L541.3 792.8 L545.8 792.8 L550.4 792.8 L554.9 792.8 L559.5 792.8 L564.1 792.8 L568.6 792.8 L573.2 792.8 L577.8 792.8 L582.3 792.8 L586.9 792.8 L591.4 792.8 L596.0 792.8 L600.6 792.8 L605.1 792.8 L609.7 792.8 L614.2 792.8 L618.8 792.8 L623.4 792.8 L627.9 792.8 L632.5 792.8 L637.1 792.8 L641.6 792.8 L646.2 792.8 L650.7 792.8 L655.3 792.8 L659.9 792.8 L664.4 792.8 L669.0 792.8 L673.6 792.8 L678.1 792.8 L682.7 792.8 L687.2 792.8 L691.8 792.8 L696.4 792.8 L700.9 792.8 L705.5 792.8 L710.0 792.8 L714.6 792.8 L719.2 792.8 L723.7 792.8 L728.3 792.8 L732.9 792.8 L737.4 792.8 L742.0 792.8 L746.5 792.8 L751.1 792.8 L755.7 792.8 L760.2 792.8 L764.8 792.8 L769.3 792.8 L773.9 792.8 L778.5 792.8 L783.0 792.8 L787.6 792.8 L792.2 792.8 L796.7 792.8 L801.3 792.8 L805.8 792.8 L810.4 792.8 L815.0 792.8 L819.5 792.8 L824.1 792.8 L828.6 792.8 L833.2 792.8 L837.8 792.8 L842.3 792.8 L846.9 792.8 L851.5 792.8 L856.0 792.8 L860.6 792.8 L865.1 792.8 L869.7 792.8 L874.3 792.8 L878.8 792.8 L883.4 792.8 L888.0 792.8 L892.5 792.8 L897.1 792.8 L901.6 792.8 L906.2 792.8 L910.8 792.8 L915.3 792.8 L921.8 792.8 L926.6 772.9 L930.8 662.9 L935.6 648.9 L940.1 662.3 L944.8 669.9 L949.3 686.4 L953.8 782.7 L958.6 792.8 L960.9 792.8 L965.5 792.8 L970.1 792.8 L974.6 792.8 L979.2 792.8 L983.7 792.8 L988.3 792.8 L992.9 792.8 L997.4 792.8 L1002.0 792.8 L1006.6 792.8 L1011.1 792.8 L1015.7 792.8 L1020.2 792.8 L1024.8 792.8 L1029.4 792.8 L1033.9 792.8 L1038.5 792.8 L1043.0 792.8 L1047.6 792.8 L1054.1 792.8 L1058.7 698.2 L1062.9 689.8 L1065.3 687.8 L1069.8 680.8 L1074.8 700.1 L1078.9 774.6 L1083.4 792.8 L1088.7 792.8 L1093.2 792.8 L1097.8 792.8 L1102.4 792.8 L1106.9 792.8 L1111.5 792.8 L1116.0 792.8 L1120.6 792.8 L1125.2 792.8 L1129.7 792.8 L1134.3 792.8 L1138.8 792.8 L1143.4 792.8 L1148.0 792.8 L1152.5 792.8 L1157.1 792.8 L1161.7 792.8 L1166.2 792.8 L1170.8 792.8 L1175.3 792.8 L1179.9 792.8 L1184.5 792.8 L1189.0 792.8 L1193.6 792.8 L1199.9 792.8 L1204.5 730.4 L1209.0 683.6 L1213.6 675.5 L1218.1 688.6 L1222.8 690.3 L1227.4 747.4 L1231.9 785.5 L1236.5 792.8 L1239.2 792.8 L1243.8 792.8 L1248.3 792.8 L1252.9 792.8 L1257.4 792.8 L1262.0 792.8" fill="none" stroke="#2ca02c" stroke-width="1.6" stroke-linejoin="round"/>
<g fill="#2ca02c" stroke="#333" stroke-width="0.9"><circle cx="107.9" cy="792.8" r="1.55"/><circle cx="112.5" cy="792.8" r="1.55"/><circle cx="117.0" cy="792.8" r="1.55"/><circle cx="121.6" cy="792.8" r="1.55"/><circle cx="126.1" cy="792.8" r="1.55"/><circle cx="130.7" cy="792.8" r="1.55"/><circle cx="135.3" cy="792.8" r="1.55"/><circle cx="139.8" cy="792.8" r="1.55"/><circle cx="144.4" cy="792.8" r="1.55"/><circle cx="149.0" cy="792.8" r="1.55"/><circle cx="153.5" cy="792.8" r="1.55"/><circle cx="158.1" cy="792.8" r="1.55"/><circle cx="162.6" cy="792.8" r="1.55"/><circle cx="167.2" cy="792.8" r="1.55"/><circle cx="171.8" cy="792.8" r="1.55"/><circle cx="176.3" cy="792.8" r="1.55"/><circle cx="180.9" cy="792.8" r="1.55"/><circle cx="185.4" cy="792.8" r="1.55"/><circle cx="190.0" cy="792.8" r="1.55"/><circle cx="194.6" cy="792.8" r="1.55"/><circle cx="199.1" cy="792.8" r="1.55"/><circle cx="203.7" cy="792.8" r="1.55"/><circle cx="208.3" cy="792.8" r="1.55"/><circle cx="212.8" cy="792.8" r="1.55"/><circle cx="217.4" cy="792.8" r="1.55"/><circle cx="221.9" cy="792.8" r="1.55"/><circle cx="226.5" cy="792.8" r="1.55"/><circle cx="231.1" cy="792.8" r="1.55"/><circle cx="235.6" cy="792.8" r="1.55"/><circle cx="240.2" cy="792.8" r="1.55"/><circle cx="244.8" cy="792.8" r="1.55"/><circle cx="249.3" cy="792.8" r="1.55"/><circle cx="253.9" cy="792.8" r="1.55"/><circle cx="258.4" cy="792.8" r="1.55"/><circle cx="263.0" cy="792.8" r="1.55"/><circle cx="267.6" cy="792.8" r="1.55"/><circle cx="272.1" cy="792.8" r="1.55"/><circle cx="276.7" cy="792.8" r="1.55"/><circle cx="281.2" cy="792.8" r="1.55"/><circle cx="285.8" cy="792.8" r="1.55"/><circle cx="290.4" cy="792.8" r="1.55"/><circle cx="294.9" cy="792.8" r="1.55"/><circle cx="299.5" cy="792.8" r="1.55"/><circle cx="304.1" cy="792.8" r="1.55"/><circle cx="308.6" cy="792.8" r="1.55"/><circle cx="313.2" cy="792.8" r="1.55"/><circle cx="317.7" cy="792.8" r="1.55"/><circle cx="322.3" cy="792.8" r="1.55"/><circle cx="326.9" cy="792.8" r="1.55"/><circle cx="331.4" cy="792.8" r="1.55"/><circle cx="336.0" cy="792.8" r="1.55"/><circle cx="340.5" cy="792.8" r="1.55"/><circle cx="345.1" cy="792.8" r="1.55"/><circle cx="349.7" cy="792.8" r="1.55"/><circle cx="354.2" cy="792.8" r="1.55"/><circle cx="358.8" cy="792.8" r="1.55"/><circle cx="363.4" cy="792.8" r="1.55"/><circle cx="367.9" cy="792.8" r="1.55"/><circle cx="372.5" cy="792.8" r="1.55"/><circle cx="377.0" cy="792.8" r="1.55"/><circle cx="381.6" cy="792.8" r="1.55"/><circle cx="386.2" cy="792.8" r="1.55"/><circle cx="390.7" cy="792.8" r="1.55"/><circle cx="395.3" cy="792.8" r="1.55"/><circle cx="399.8" cy="792.8" r="1.55"/><circle cx="404.4" cy="792.8" r="1.55"/><circle cx="409.0" cy="792.8" r="1.55"/><circle cx="413.5" cy="792.8" r="1.55"/><circle cx="418.1" cy="792.8" r="1.55"/><circle cx="422.7" cy="792.8" r="1.55"/><circle cx="427.2" cy="792.8" r="1.55"/><circle cx="431.8" cy="792.8" r="1.55"/><circle cx="436.3" cy="792.8" r="1.55"/><circle cx="440.9" cy="792.8" r="1.55"/><circle cx="445.5" cy="792.8" r="1.55"/><circle cx="450.0" cy="792.8" r="1.55"/><circle cx="454.6" cy="792.8" r="1.55"/><circle cx="459.2" cy="792.8" r="1.55"/><circle cx="463.7" cy="792.8" r="1.55"/><circle cx="468.3" cy="792.8" r="1.55"/><circle cx="472.8" cy="792.8" r="1.55"/><circle cx="477.4" cy="792.8" r="1.55"/><circle cx="482.0" cy="792.8" r="1.55"/><circle cx="486.5" cy="792.8" r="1.55"/><circle cx="491.1" cy="792.8" r="1.55"/><circle cx="495.6" cy="792.8" r="1.55"/><circle cx="500.2" cy="792.8" r="1.55"/><circle cx="504.8" cy="792.8" r="1.55"/><circle cx="509.3" cy="792.8" r="1.55"/><circle cx="513.9" cy="792.8" r="1.55"/><circle cx="518.5" cy="792.8" r="1.55"/><circle cx="523.0" cy="792.8" r="1.55"/><circle cx="527.6" cy="792.8" r="1.55"/><circle cx="532.1" cy="792.8" r="1.55"/><circle cx="536.7" cy="792.8" r="1.55"/><circle cx="541.3" cy="792.8" r="1.55"/><circle cx="545.8" cy="792.8" r="1.55"/><circle cx="550.4" cy="792.8" r="1.55"/><circle cx="554.9" cy="792.8" r="1.55"/><circle cx="559.5" cy="792.8" r="1.55"/><circle cx="564.1" cy="792.8" r="1.55"/><circle cx="568.6" cy="792.8" r="1.55"/><circle cx="573.2" cy="792.8" r="1.55"/><circle cx="577.8" cy="792.8" r="1.55"/><circle cx="582.3" cy="792.8" r="1.55"/><circle cx="586.9" cy="792.8" r="1.55"/><circle cx="591.4" cy="792.8" r="1.55"/><circle cx="596.0" cy="792.8" r="1.55"/><circle cx="600.6" cy="792.8" r="1.55"/><circle cx="605.1" cy="792.8" r="1.55"/><circle cx="609.7" cy="792.8" r="1.55"/><circle cx="614.2" cy="792.8" r="1.55"/><circle cx="618.8" cy="792.8" r="1.55"/><circle cx="623.4" cy="792.8" r="1.55"/><circle cx="627.9" cy="792.8" r="1.55"/><circle cx="632.5" cy="792.8" r="1.55"/><circle cx="637.1" cy="792.8" r="1.55"/><circle cx="641.6" cy="792.8" r="1.55"/><circle cx="646.2" cy="792.8" r="1.55"/><circle cx="650.7" cy="792.8" r="1.55"/><circle cx="655.3" cy="792.8" r="1.55"/><circle cx="659.9" cy="792.8" r="1.55"/><circle cx="664.4" cy="792.8" r="1.55"/><circle cx="669.0" cy="792.8" r="1.55"/><circle cx="673.6" cy="792.8" r="1.55"/><circle cx="678.1" cy="792.8" r="1.55"/><circle cx="682.7" cy="792.8" r="1.55"/><circle cx="687.2" cy="792.8" r="1.55"/><circle cx="691.8" cy="792.8" r="1.55"/><circle cx="696.4" cy="792.8" r="1.55"/><circle cx="700.9" cy="792.8" r="1.55"/><circle cx="705.5" cy="792.8" r="1.55"/><circle cx="710.0" cy="792.8" r="1.55"/><circle cx="714.6" cy="792.8" r="1.55"/><circle cx="719.2" cy="792.8" r="1.55"/><circle cx="723.7" cy="792.8" r="1.55"/><circle cx="728.3" cy="792.8" r="1.55"/><circle cx="732.9" cy="792.8" r="1.55"/><circle cx="737.4" cy="792.8" r="1.55"/><circle cx="742.0" cy="792.8" r="1.55"/><circle cx="746.5" cy="792.8" r="1.55"/><circle cx="751.1" cy="792.8" r="1.55"/><circle cx="755.7" cy="792.8" r="1.55"/><circle cx="760.2" cy="792.8" r="1.55"/><circle cx="764.8" cy="792.8" r="1.55"/><circle cx="769.3" cy="792.8" r="1.55"/><circle cx="773.9" cy="792.8" r="1.55"/><circle cx="778.5" cy="792.8" r="1.55"/><circle cx="783.0" cy="792.8" r="1.55"/><circle cx="787.6" cy="792.8" r="1.55"/><circle cx="792.2" cy="792.8" r="1.55"/><circle cx="796.7" cy="792.8" r="1.55"/><circle cx="801.3" cy="792.8" r="1.55"/><circle cx="805.8" cy="792.8" r="1.55"/><circle cx="810.4" cy="792.8" r="1.55"/><circle cx="815.0" cy="792.8" r="1.55"/><circle cx="819.5" cy="792.8" r="1.55"/><circle cx="824.1" cy="792.8" r="1.55"/><circle cx="828.6" cy="792.8" r="1.55"/><circle cx="833.2" cy="792.8" r="1.55"/><circle cx="837.8" cy="792.8" r="1.55"/><circle cx="842.3" cy="792.8" r="1.55"/><circle cx="846.9" cy="792.8" r="1.55"/><circle cx="851.5" cy="792.8" r="1.55"/><circle cx="856.0" cy="792.8" r="1.55"/><circle cx="860.6" cy="792.8" r="1.55"/><circle cx="865.1" cy="792.8" r="1.55"/><circle cx="869.7" cy="792.8" r="1.55"/><circle cx="874.3" cy="792.8" r="1.55"/><circle cx="878.8" cy="792.8" r="1.55"/><circle cx="883.4" cy="792.8" r="1.55"/><circle cx="888.0" cy="792.8" r="1.55"/><circle cx="892.5" cy="792.8" r="1.55"/><circle cx="897.1" cy="792.8" r="1.55"/><circle cx="901.6" cy="792.8" r="1.55"/><circle cx="906.2" cy="792.8" r="1.55"/><circle cx="910.8" cy="792.8" r="1.55"/><circle cx="915.3" cy="792.8" r="1.55"/><circle cx="921.8" cy="792.8" r="1.55"/><circle cx="926.6" cy="772.9" r="1.55"/><circle cx="930.8" cy="662.9" r="1.55"/><circle cx="935.6" cy="648.9" r="1.55"/><circle cx="940.1" cy="662.3" r="1.55"/><circle cx="944.8" cy="669.9" r="1.55"/><circle cx="949.3" cy="686.4" r="1.55"/><circle cx="953.8" cy="782.7" r="1.55"/><circle cx="958.6" cy="792.8" r="1.55"/><circle cx="960.9" cy="792.8" r="1.55"/><circle cx="965.5" cy="792.8" r="1.55"/><circle cx="970.1" cy="792.8" r="1.55"/><circle cx="974.6" cy="792.8" r="1.55"/><circle cx="979.2" cy="792.8" r="1.55"/><circle cx="983.7" cy="792.8" r="1.55"/><circle cx="988.3" cy="792.8" r="1.55"/><circle cx="992.9" cy="792.8" r="1.55"/><circle cx="997.4" cy="792.8" r="1.55"/><circle cx="1002.0" cy="792.8" r="1.55"/><circle cx="1006.6" cy="792.8" r="1.55"/><circle cx="1011.1" cy="792.8" r="1.55"/><circle cx="1015.7" cy="792.8" r="1.55"/><circle cx="1020.2" cy="792.8" r="1.55"/><circle cx="1024.8" cy="792.8" r="1.55"/><circle cx="1029.4" cy="792.8" r="1.55"/><circle cx="1033.9" cy="792.8" r="1.55"/><circle cx="1038.5" cy="792.8" r="1.55"/><circle cx="1043.0" cy="792.8" r="1.55"/><circle cx="1047.6" cy="792.8" r="1.55"/><circle cx="1054.1" cy="792.8" r="1.55"/><circle cx="1058.7" cy="698.2" r="1.55"/><circle cx="1062.9" cy="689.8" r="1.55"/><circle cx="1065.3" cy="687.8" r="1.55"/><circle cx="1069.8" cy="680.8" r="1.55"/><circle cx="1074.8" cy="700.1" r="1.55"/><circle cx="1078.9" cy="774.6" r="1.55"/><circle cx="1083.4" cy="792.8" r="1.55"/><circle cx="1088.7" cy="792.8" r="1.55"/><circle cx="1093.2" cy="792.8" r="1.55"/><circle cx="1097.8" cy="792.8" r="1.55"/><circle cx="1102.4" cy="792.8" r="1.55"/><circle cx="1106.9" cy="792.8" r="1.55"/><circle cx="1111.5" cy="792.8" r="1.55"/><circle cx="1116.0" cy="792.8" r="1.55"/><circle cx="1120.6" cy="792.8" r="1.55"/><circle cx="1125.2" cy="792.8" r="1.55"/><circle cx="1129.7" cy="792.8" r="1.55"/><circle cx="1134.3" cy="792.8" r="1.55"/><circle cx="1138.8" cy="792.8" r="1.55"/><circle cx="1143.4" cy="792.8" r="1.55"/><circle cx="1148.0" cy="792.8" r="1.55"/><circle cx="1152.5" cy="792.8" r="1.55"/><circle cx="1157.1" cy="792.8" r="1.55"/><circle cx="1161.7" cy="792.8" r="1.55"/><circle cx="1166.2" cy="792.8" r="1.55"/><circle cx="1170.8" cy="792.8" r="1.55"/><circle cx="1175.3" cy="792.8" r="1.55"/><circle cx="1179.9" cy="792.8" r="1.55"/><circle cx="1184.5" cy="792.8" r="1.55"/><circle cx="1189.0" cy="792.8" r="1.55"/><circle cx="1193.6" cy="792.8" r="1.55"/><circle cx="1199.9" cy="792.8" r="1.55"/><circle cx="1204.5" cy="730.4" r="1.55"/><circle cx="1209.0" cy="683.6" r="1.55"/><circle cx="1213.6" cy="675.5" r="1.55"/><circle cx="1218.1" cy="688.6" r="1.55"/><circle cx="1222.8" cy="690.3" r="1.55"/><circle cx="1227.4" cy="747.4" r="1.55"/><circle cx="1231.9" cy="785.5" r="1.55"/><circle cx="1236.5" cy="792.8" r="1.55"/><circle cx="1239.2" cy="792.8" r="1.55"/><circle cx="1243.8" cy="792.8" r="1.55"/><circle cx="1248.3" cy="792.8" r="1.55"/><circle cx="1252.9" cy="792.8" r="1.55"/><circle cx="1257.4" cy="792.8" r="1.55"/><circle cx="1262.0" cy="792.8" r="1.55"/></g>
<rect x="43.0" y="822.5" width="10.5" height="10.5" rx="2" fill="#1f77b4"/>
<text x="56.7" y="833" font-size="12" fill="#222">Downlink (SU + MU)</text>
<rect x="186.5" y="822.5" width="10.5" height="10.5" rx="2" fill="#ff7f0e"/>
<text x="200.4" y="833" font-size="12" fill="#222">Uplink</text>
<rect x="255.4" y="822.5" width="10.5" height="10.5" rx="2" fill="#2ca02c"/>
<text x="268.4" y="833" font-size="12" fill="#222">MU Downlink</text>

</svg>
<!--/CHART-->
<div class="abs" style="left:0;top:839px;width:1356px;height:6px;background:#000"></div>
<!--REDC-->
<svg class="abs" style="left:0;top:0;z-index:5" width="1356" height="845"><path d="M1039.7 637.6 C1038.5 639.0 1034.6 642.8 1032.2 646.2 C1029.8 649.7 1027.1 654.1 1025.1 658.3 C1023.1 662.5 1021.5 666.8 1020.1 671.3 C1018.7 675.8 1017.4 680.2 1016.5 685.0 C1015.6 689.8 1015.0 694.6 1014.6 700.0 C1014.2 705.4 1014.0 710.6 1014.2 717.5 C1014.4 724.4 1014.5 733.8 1016.0 741.4 C1017.5 749.0 1020.5 756.4 1023.3 763.4 C1026.0 770.4 1029.1 777.2 1032.5 783.6 C1035.9 790.0 1039.5 796.7 1043.5 801.9 C1047.5 807.1 1051.5 811.3 1056.4 814.8 C1061.3 818.3 1066.8 820.9 1072.9 823.0 C1079.0 825.1 1086.7 826.1 1093.1 827.2 C1099.5 828.3 1106.2 828.8 1111.4 829.4 C1116.6 830.0 1121.3 831.3 1124.5 830.6 C1127.7 829.9 1129.5 829.5 1130.8 825.0 C1132.1 820.5 1132.7 811.0 1132.5 803.8 C1132.3 796.6 1131.2 789.7 1129.8 781.7 C1128.4 773.8 1126.1 763.4 1124.3 756.1 C1122.5 748.8 1121.5 744.4 1118.8 737.7 C1116.0 731.0 1110.9 722.7 1107.8 715.7 C1104.7 708.8 1102.5 702.0 1100.0 696.0 C1097.5 690.0 1095.4 684.8 1093.0 680.0 C1090.6 675.2 1088.1 671.1 1085.5 667.3 C1082.9 663.5 1080.1 660.6 1077.4 657.3 C1074.7 653.9 1072.1 649.9 1069.4 647.2 C1066.7 644.5 1064.5 643.3 1061.3 641.2 C1058.1 639.1 1054.1 636.5 1050.3 634.6 C1046.5 632.7 1042.2 630.9 1038.2 629.6 C1034.2 628.3 1028.5 627.1 1026.6 626.6" fill="none" stroke="#e41e1e" stroke-width="6.8" stroke-linecap="round" stroke-linejoin="round"/><path d="M1183.1 643.1 C1184.4 643.7 1187.2 645.2 1190.8 646.9 C1194.4 648.6 1199.7 650.5 1204.6 653.3 C1209.5 656.1 1214.9 659.8 1220.0 663.6 C1225.1 667.4 1229.8 671.0 1235.4 676.2 C1241.0 681.4 1248.4 688.5 1253.8 694.6 C1259.2 700.8 1263.1 705.9 1267.7 713.1 C1272.3 720.3 1277.8 730.7 1281.5 737.7 C1285.2 744.7 1287.0 749.5 1289.6 754.9 C1292.2 760.2 1294.9 764.8 1297.0 769.8 C1299.1 774.8 1301.0 779.7 1302.0 784.7 C1303.0 789.7 1303.2 795.1 1303.2 799.6 C1303.2 804.1 1303.6 808.4 1302.3 812.0 C1301.0 815.6 1298.0 818.8 1295.5 821.5 C1293.0 824.2 1290.0 826.3 1287.0 828.5 C1284.0 830.7 1281.5 832.8 1277.5 834.5 C1273.5 836.2 1268.5 838.0 1263.0 839.0 C1257.5 840.0 1250.0 840.4 1244.8 840.6 C1239.6 840.8 1236.0 840.4 1232.0 840.0 C1228.0 839.6 1225.3 839.0 1220.7 838.1 C1216.1 837.2 1209.8 835.9 1204.6 834.4 C1199.4 832.9 1194.5 831.5 1189.7 829.4 C1184.9 827.3 1179.9 824.7 1176.0 822.0 C1172.1 819.3 1169.0 816.2 1166.1 813.3 C1163.2 810.4 1160.7 807.9 1158.6 804.6 C1156.5 801.3 1155.0 797.3 1153.7 793.4 C1152.4 789.5 1151.3 785.8 1150.6 781.0 C1149.9 776.2 1149.5 770.0 1149.3 764.8 C1149.1 759.6 1149.1 755.8 1149.2 750.0 C1149.3 744.2 1149.5 737.2 1150.0 730.0 C1150.5 722.8 1151.1 714.1 1152.3 706.9 C1153.5 699.7 1154.9 693.6 1156.9 686.9 C1159.0 680.2 1162.0 672.8 1164.6 666.9 C1167.2 661.0 1169.9 655.4 1172.3 651.5 C1174.7 647.6 1177.4 645.2 1179.2 643.8 C1181.0 642.4 1182.4 643.2 1183.1 643.1" fill="none" stroke="#e41e1e" stroke-width="6.8" stroke-linecap="round" stroke-linejoin="round"/></svg>
<!--/REDC-->
</body></html>
